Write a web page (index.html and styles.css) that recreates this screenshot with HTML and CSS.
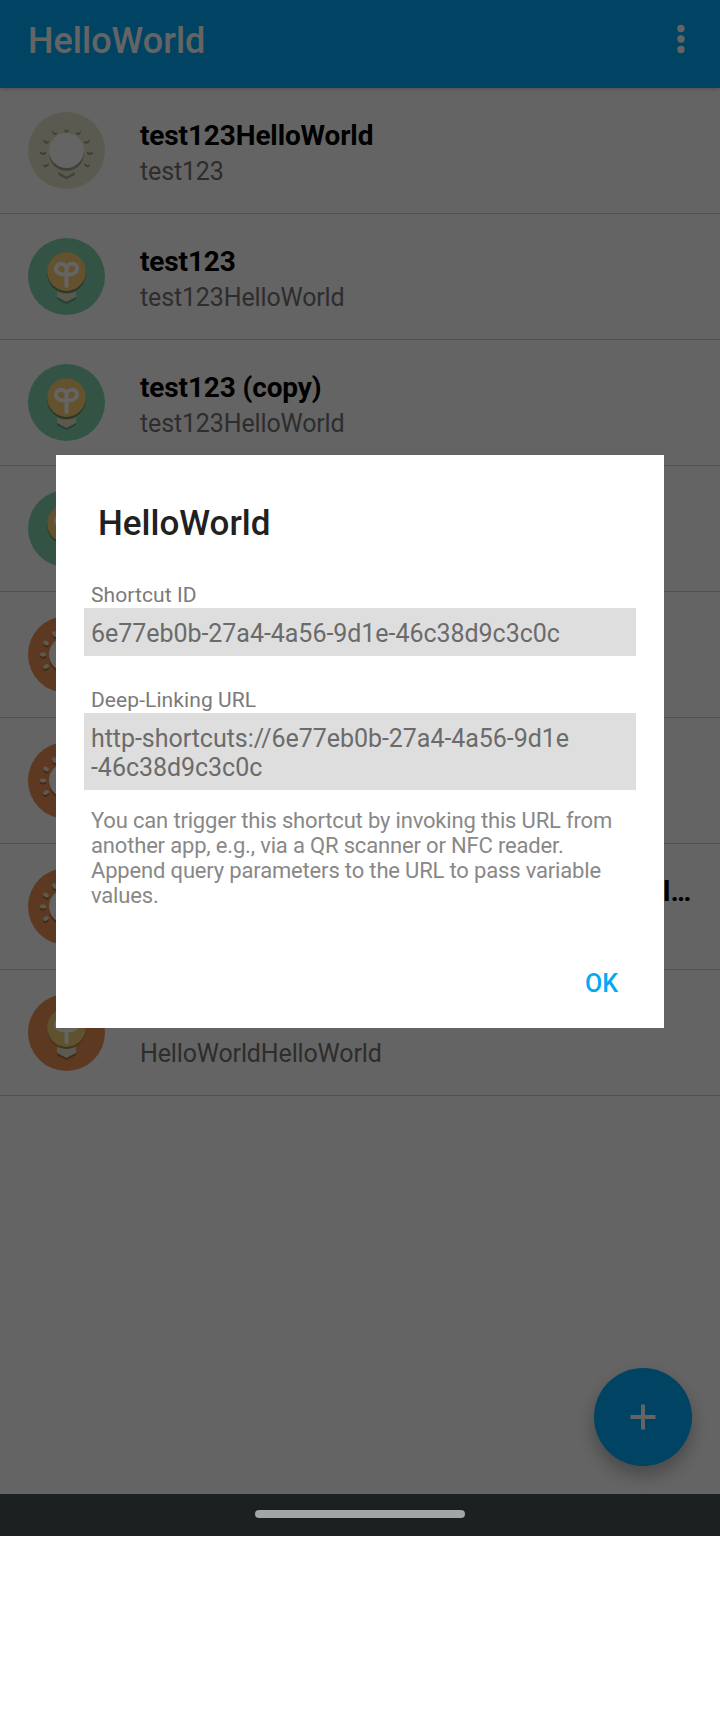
FILE: index.html
```html
<!DOCTYPE html>
<html lang="en">
<head>
<meta charset="utf-8">
<title>HelloWorld</title>
<link rel="stylesheet" href="styles.css">
</head>
<body>
<svg class="defs" width="0" height="0" aria-hidden="true">
  <defs>
    <g id="rays">
      <path d="M38.5 14.500v2M26 17.200l1 1.700M51 17.200l-1 1.700M17.200 26.500l1.700 1M59.800 26.500l-1.700 1M14 38.500h2.200M60.800 38.500h2.200M17.200 51l1.700-1M59.800 51l-1.700-1"/>
    </g>
    <g id="sprout">
      <path d="M38.500 48V31C38.500 28 36 25.800 33 25.800C30 25.800 27.900 28 27.900 30.700C27.900 34.300 32 36.600 38.500 36.600C45 36.600 49.100 34.300 49.100 30.700C49.100 28 47 25.800 44 25.800C41 25.800 38.500 28 38.500 31"/>
    </g>
    <symbol id="pale" viewBox="0 0 77 77">
      <circle cx="38.500" cy="38.500" r="38.500" fill="#e1e1c8"/>
      <use href="#rays" class="ray ray-pale" y="2.200"/>
      <use href="#rays" class="ray ray-light"/>
      <path d="M30.300 60l8.200 4.500 8.200-4.500v3l-8.200 4.500-8.200-4.500z" fill="#a8a894"/>
      <circle cx="38.500" cy="41.300" r="17.500" fill="#a0a08c"/>
      <circle cx="38.500" cy="38.500" r="17.500" fill="#fafafa"/>
    </symbol>
    <symbol id="green" viewBox="0 0 77 77">
      <circle cx="38.500" cy="38.500" r="38.500" fill="#7fcfaa"/>
      <path d="M29 50h19v11l-9.500 5-9.500-5z" fill="#5d9b7e"/>
      <path d="M29 50h19v9l-9.500 5-9.500-5z" fill="#e6dcc0"/>
      <path d="M29 51h19v2.500q-9.500 4.500-19 0z" fill="#b9b098"/>
      <circle cx="38.500" cy="35.600" r="19.300" fill="#628c60"/>
      <circle cx="38.500" cy="33.600" r="19.300" fill="#facd73"/>
      <use href="#sprout" class="sprout"/>
    </symbol>
    <symbol id="orange" viewBox="0 0 77 77">
      <circle cx="38.500" cy="38.500" r="38.500" fill="#e68f50"/>
      <use href="#rays" class="ray ray-shade" y="2"/>
      <use href="#rays" class="ray ray-light"/>
      <circle cx="38.500" cy="41" r="17.500" fill="#a56638"/>
      <circle cx="38.500" cy="38.500" r="17.500" fill="#fafafa"/>
    </symbol>
    <symbol id="amber" viewBox="0 0 77 77">
      <circle cx="38.500" cy="38.500" r="38.500" fill="#e68f50"/>
      <path d="M29 50h19v11l-9.500 5-9.500-5z" fill="#a56638"/>
      <path d="M29 50h19v9l-9.500 5-9.500-5z" fill="#e1e1c8"/>
      <circle cx="38.500" cy="35.600" r="19.300" fill="#9c8450"/>
      <circle cx="38.500" cy="33.600" r="19.300" fill="#f0cd73"/>
      <use href="#sprout" class="sprout"/>
    </symbol>
  </defs>
</svg>
<div class="screen">
  <header class="bar">
    <h1 class="bar-title">HelloWorld</h1>
    <svg class="more" width="8" height="30" viewBox="0 0 8 30"><circle cx="4" cy="4.500" r="3.700"/><circle cx="4" cy="15" r="3.700"/><circle cx="4" cy="25.500" r="3.700"/></svg>
  </header>
  <main class="list">
    <div class="row"><svg class="icon"><use href="#pale"/></svg><div class="text"><div class="name">test123HelloWorld</div><div class="sub">test123</div></div></div>
    <div class="row"><svg class="icon"><use href="#green"/></svg><div class="text"><div class="name">test123</div><div class="sub">test123HelloWorld</div></div></div>
    <div class="row"><svg class="icon"><use href="#green"/></svg><div class="text"><div class="name">test123 (copy)</div><div class="sub">test123HelloWorld</div></div></div>
    <div class="row"><svg class="icon"><use href="#green"/></svg></div>
    <div class="row"><svg class="icon"><use href="#orange"/></svg></div>
    <div class="row"><svg class="icon"><use href="#orange"/></svg></div>
    <div class="row"><svg class="icon"><use href="#orange"/></svg><div class="text end"><div class="name">l…</div><div class="sub">&nbsp;</div></div></div>
    <div class="row"><svg class="icon"><use href="#amber"/></svg><div class="text"><div class="name">&nbsp;</div><div class="sub">HelloWorldHelloWorld</div></div></div>
  </main>
  <div class="fab"><svg width="26" height="26" viewBox="0 0 26 26"><path d="M13 .5v25M.5 13h25"/></svg></div>
  <div class="scrim">
    <section class="dialog">
      <h2 class="dialog-title">HelloWorld</h2>
      <div class="label">Shortcut ID</div>
      <div class="value">6e77eb0b-27a4-4a56-9d1e-46c38d9c3c0c</div>
      <div class="label second">Deep-Linking URL</div>
      <div class="value">http-shortcuts://6e77eb0b-27a4-4a56-9d1e<br>-46c38d9c3c0c</div>
      <p class="hint">You can trigger this shortcut by invoking this URL from<br>another app, e.g., via a QR scanner or NFC reader.<br>Append query parameters to the URL to pass variable<br>values.</p>
      <div class="actions"><span class="ok">OK</span></div>
    </section>
  </div>
</div>
<footer class="nav"><div class="handle"></div></footer>
</body>
</html>
```
FILE: styles.css
```css
* { box-sizing: border-box; }
body { margin: 0; background: #fff; font-family: Roboto, sans-serif; }
.defs { position: absolute; }
.screen { position: relative; width: 720px; height: 1494px; background: #fafafa; overflow: hidden; }
.bar { position: relative; display: flex; justify-content: space-between; align-items: flex-start; height: 88px; padding: 19px 35px 0 28px; background: #03a9f4; box-shadow: 0 1px 4px rgba(0,0,0,.2); }
.bar-title { margin: 1px 0 0; font-size: 36px; line-height: 42px; font-weight: 500; color: #fafafa; }
.more { margin-top: 5px; fill: #fafafa; }
.row { display: flex; align-items: center; height: 126px; padding: 0 28px; border-bottom: 1px solid #cdcdcd; }
.icon { flex: none; width: 77px; height: 77px; }
.text { padding: 6px 0 0 35px; }
.end { margin-left: auto; padding-right: 1px; }
.name { font-size: 28px; line-height: 36px; font-weight: 700; letter-spacing: -.13px; color: #000; white-space: pre; }
.sub { font-size: 25px; line-height: 35px; letter-spacing: -.14px; color: #727272; }
.ray { fill: none; stroke-width: 4; stroke-linecap: round; }
.ray-pale { stroke: #9e9e8a; }
.ray-shade { stroke: #a56638; }
.ray-light { stroke: #e1e1c8; }
.sprout { fill: none; stroke: #fafafa; stroke-width: 4; stroke-linecap: round; }
.fab { position: absolute; right: 28px; bottom: 28px; display: grid; place-items: center; width: 98px; height: 98px; border-radius: 50%; background: #03a9f4; box-shadow: 0 9px 18px rgba(0,0,0,.28); }
.fab path { stroke: #fafafa; stroke-width: 4; }
.scrim { position: absolute; inset: 0; background: rgba(0,0,0,.6); }
.dialog { display: flex; flex-direction: column; width: 608px; height: 573px; margin: 455px 0 0 56px; padding: 47px 28px 0; background: #fff; }
.dialog-title { margin: 0 0 36px 14px; font-size: 35px; line-height: 44px; font-weight: 500; color: #212121; }
.label { padding-left: 7px; font-size: 21px; line-height: 26px; letter-spacing: .08px; color: #7a7a7a; }
.second { margin-top: 31px; }
.value { padding: 11px 7px 8px; background: #dedede; font-size: 25px; line-height: 29px; letter-spacing: -.04px; color: #6b6b6b; white-space: nowrap; }
.hint { margin: 18px 0 0 7px; font-size: 22px; line-height: 25px; letter-spacing: -.17px; color: #888; white-space: nowrap; }
.actions { display: flex; justify-content: flex-end; margin-top: 60px; padding-right: 18px; }
.ok { font-size: 25px; line-height: 32px; font-weight: 500; color: #03a9f4; }
.nav { display: flex; justify-content: center; align-items: center; height: 42px; padding-bottom: 2px; background: #1c2021; }
.handle { width: 210px; height: 8px; border-radius: 4px; background: #a0a5a5; }
```
